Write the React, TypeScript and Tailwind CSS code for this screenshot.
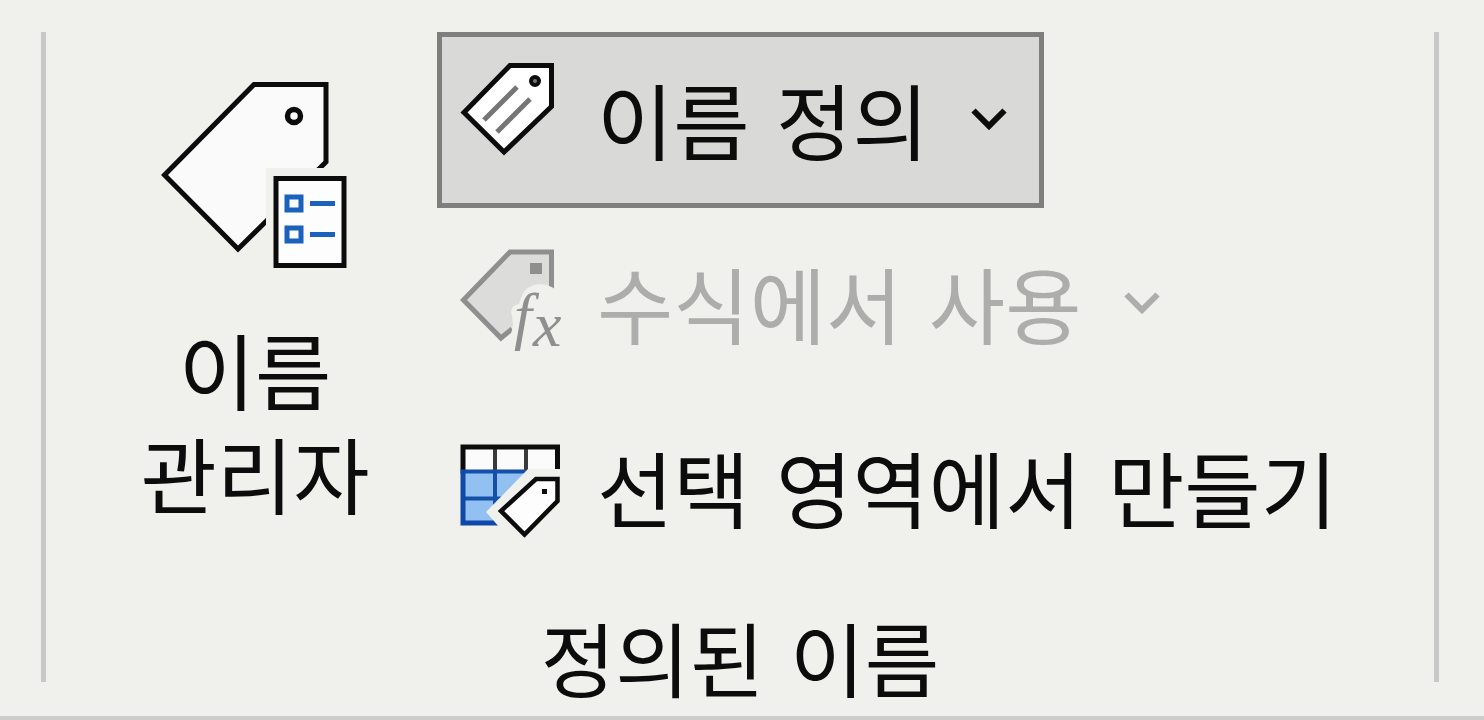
import type { ReactNode } from 'react';

function NameManagerIcon() {
  return (
    <svg className="h-[188px] w-[188px] shrink-0" viewBox="0 0 188 188" fill="none" aria-hidden="true">
      <path d="M93 2.5H165V80L77 167L3.5 93Z" fill="#fafafa" stroke="#0c0c0c" strokeWidth="5" />
      <circle cx="133" cy="34" r="6.5" fill="#fafafa" stroke="#0c0c0c" strokeWidth="5.5" />
      <path d="M105 86H188V188H105Z" fill="#f0f0ed" />
      <path d="M115 96.5H183V183.5H115Z" fill="#fdfdfd" stroke="#0c0c0c" strokeWidth="5" />
      <path d="M126 115H140V128H126ZM126 146H140V159H126ZM149 121.5H174M149 152.5H174" stroke="#1b62bd" strokeWidth="5" />
    </svg>
  );
}

function DefineNameIcon() {
  return (
    <svg className="h-[120px] w-[104px] shrink-0" viewBox="0 0 104 120" fill="none" aria-hidden="true">
      <path d="M51 5.5H92.5V46.5L45 92L5 52.5Z" fill="#fff" stroke="#0c0c0c" strokeWidth="5" />
      <circle cx="76" cy="21" r="4" fill="#777" stroke="#0c0c0c" strokeWidth="4" />
      <path d="M58 27L25 60M71 39L38 72" stroke="#757575" strokeWidth="5" />
    </svg>
  );
}

function UseInFormulaIcon() {
  return (
    <svg className="h-[120px] w-[104px] shrink-0" viewBox="0 0 104 120" aria-hidden="true">
      <path d="M92.5 46V8H51L4.5 56L42 94L53 85" fill="#dcdcdb" stroke="#8f8f8f" strokeWidth="5" />
      <path d="M71 19H83V30H71Z" fill="#8f8f8f" />
      <path d="M97 46C88 38 72 38 65 48C62 53 61 57 60 60C53 61 51 66 53 72L54 80C53 88 52 92 46 97L60 112H97Z" fill="#f0f0ed" />
      <text x="55" y="93" fill="#8f8f8f" className="font-['Liberation_Serif',serif] text-[64px] italic">
        f<tspan x="74" y="102">x</tspan>
      </text>
    </svg>
  );
}

function CreateFromSelectionIcon() {
  return (
    <svg className="h-[120px] w-[104px] shrink-0" viewBox="0 0 104 120" fill="none" aria-hidden="true">
      <path d="M4 19H98.5V41H4Z" fill="#fbfbfb" />
      <path d="M4 44H80V95H4Z" fill="#92c0f0" />
      <path d="M36 19V42M67 19V42" stroke="#3a3a3a" strokeWidth="4" />
      <path d="M4 42V19H98.5V41" stroke="#0c0c0c" strokeWidth="5" />
      <path d="M1.5 43.5H80M36 43.5V95M4 70.5H60" stroke="#1550a8" strokeWidth="4" />
      <path d="M4 42V95H60" stroke="#1048a8" strokeWidth="5" />
      <path d="M69 41H96V60L66 100H41L27 84Z" fill="#f0f0ed" />
      <path d="M77 51H98.5V73L65.5 106.5L42 83Z" fill="#fdfdfd" stroke="#0c0c0c" strokeWidth="4.5" />
      <path d="M83 61H88V66H83Z" fill="#0c0c0c" />
    </svg>
  );
}

function Chevron() {
  return (
    <svg className="ml-2 h-6 w-9 shrink-0" viewBox="0 0 36 24" fill="none" stroke="currentColor" strokeWidth="6" aria-hidden="true">
      <path d="M2.5 2.5L18 18L33.5 2.5" />
    </svg>
  );
}

type CommandProps = {
  icon: ReactNode;
  label: string;
  menu?: boolean;
  active?: boolean;
  disabled?: boolean;
};

function Command({ icon, label, menu, active, disabled }: CommandProps) {
  return (
    <button
      type="button"
      disabled={disabled}
      aria-haspopup={menu ? 'menu' : undefined}
      className={`flex h-[176px] items-center gap-[34px] border-[5px] pr-8 pl-[17px] ${
        active ? 'border-[#7f807e] bg-[#d9d9d8]' : 'border-transparent'
      } ${disabled ? 'text-[#adadab]' : 'text-[#0c0c0c]'}`}
    >
      {icon}
      <span className="pt-3 whitespace-nowrap">{label}</span>
      {menu && <Chevron />}
    </button>
  );
}

function Divider() {
  return <div className="mb-[34px] w-[5px] shrink-0 bg-[#c8c8c6]" />;
}

export default function App() {
  return (
    <main className="min-h-screen bg-[#f0f0ed] font-['DejaVu_Sans','Noto_Sans_CJK_KR',sans-serif] text-[83px] leading-[104px] text-[#0c0c0c]">
      <section aria-labelledby="group-name" className="flex justify-between border-b-4 border-[#cdcdcb] pt-8 pr-[45px] pl-[41px]">
        <Divider />
        <div className="flex grow flex-col pb-px">
          <div className="flex">
            <button type="button" className="ml-[27px] flex w-[364px] shrink-0 flex-col items-center self-start pt-[50px]">
              <NameManagerIcon />
              <span className="mt-[54px] block">이름</span>
              <span className="block">관리자</span>
            </button>
            <div className="flex flex-col items-start gap-2">
              <Command icon={<DefineNameIcon />} label="이름 정의" menu active />
              <Command icon={<UseInFormulaIcon />} label="수식에서 사용" menu disabled />
              <Command icon={<CreateFromSelectionIcon />} label="선택 영역에서 만들기" />
            </div>
          </div>
          <h2 id="group-name" className="mt-[35px] text-center text-[81px] leading-[104px]">
            정의된 이름
          </h2>
        </div>
        <Divider />
      </section>
    </main>
  );
}
